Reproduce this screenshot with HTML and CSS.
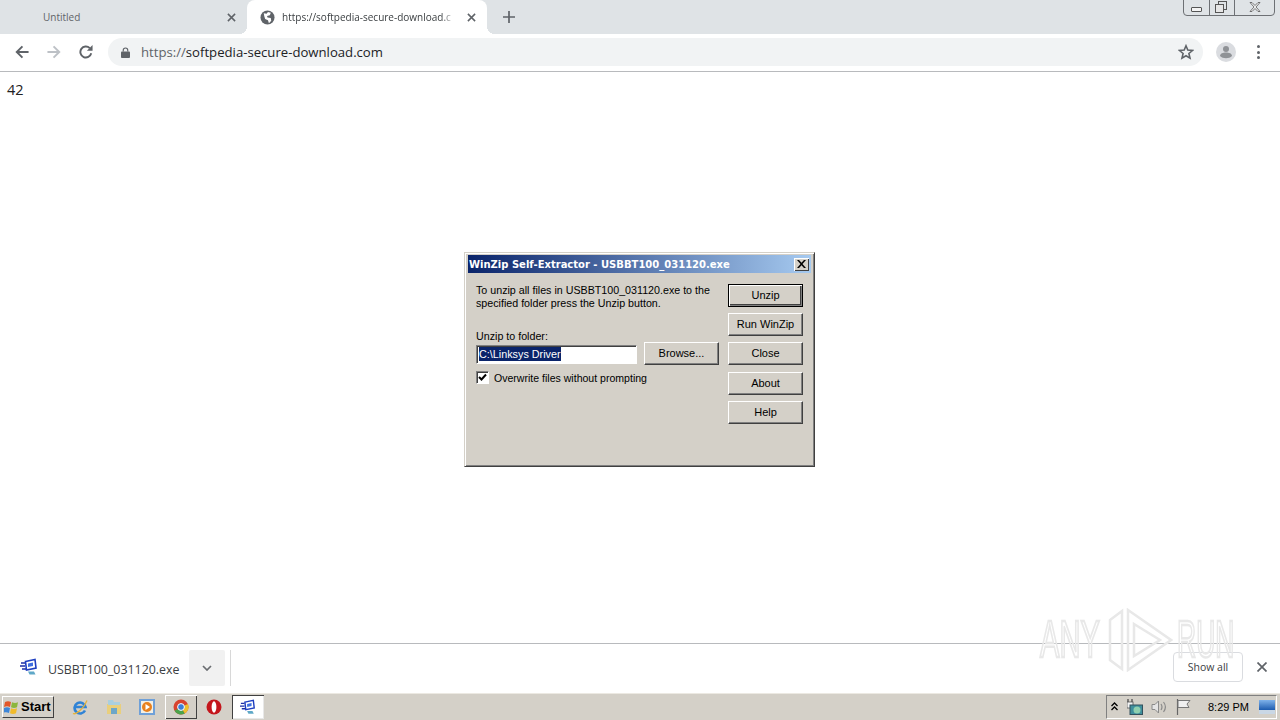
FILE: index.html
```html
<!DOCTYPE html>
<html lang="en">
<head>
<meta charset="utf-8">
<title>softpedia-secure-download.com</title>
<link rel="stylesheet" href="styles.css">
</head>
<body>
<div class="screen">
  <header class="tabstrip">
    <div class="tab tab-idle">
      <span class="tab-title">Untitled</span>
      <svg class="tab-x" viewBox="0 0 10 10"><path d="M1 1l8 8M9 1l-8 8"/></svg>
    </div>
    <div class="tab tab-active">
      <svg class="globe" viewBox="0 0 16 16"><circle cx="8" cy="8" r="7.500" fill="#5f6368"/><path d="M4 3.500l3 .5 1.500-2 3 1-1 2.500-3 1 .5 1.500 3.500.5.5 3-2.500 2.500-1-3-3-1.500-1-3z" fill="#fff"/></svg>
      <span class="tab-title tab-url">https://softpedia-secure-download.c</span>
      <svg class="tab-x" viewBox="0 0 10 10"><path d="M1 1l8 8M9 1l-8 8"/></svg>
    </div>
    <svg class="newtab" viewBox="0 0 12 12"><path d="M6 0v12M0 6h12"/></svg>
    <div class="caption">
      <span class="cap cap-min"><i class="min-glyph"></i></span>
      <span class="cap cap-max"><i class="max-back"></i><i class="max-front"></i></span>
      <span class="cap cap-close"><svg viewBox="0 0 12 10"><path d="M1 0.500h2l3 3 3-3h2l-4 4.500 4 4.500h-2l-3-3-3 3h-2l4-4.500z"/></svg></span>
    </div>
  </header>

  <nav class="toolbar">
    <svg class="nav" viewBox="0 0 16 16"><path d="M15.500 8H2M8.500 1.500L2 8l6.500 6.500"/></svg>
    <svg class="nav nav-off" viewBox="0 0 16 16"><path d="M.5 8H14M7.500 1.500L14 8l-6.500 6.500"/></svg>
    <svg class="nav nav-reload" viewBox="0 0 16 16"><path d="M14 9.500A6.300 6.300 0 1 1 12.300 3.500"/><path class="fill" d="M9 6.500H15.500V0z"/></svg>
    <div class="omnibox">
      <svg class="lock" viewBox="0 0 10 12"><path d="M2.500 5V3.500a2.500 2.500 0 0 1 5 0V5" fill="none" stroke="#5f6368" stroke-width="1.300"/><rect y="5" width="10" height="7" rx="1" fill="#5f6368"/></svg>
      <span class="url"><span class="url-dim">https://</span>softpedia-secure-download.com</span>
      <svg class="star" viewBox="0 0 16 16"><path d="M8 1.800l1.800 4.300 4.700.4-3.600 3 1.100 4.600L8 11.700l-4 2.400 1.100-4.600-3.600-3 4.700-.4z"/></svg>
    </div>
    <svg class="avatar" viewBox="0 0 20 20"><circle cx="10" cy="10" r="10" fill="#dadce0"/><circle cx="10" cy="7" r="3" fill="#8f9296"/><path d="M4 14c0-2.500 3-3.500 6-3.500s6 1 6 3.500c-1.500 1.600-3.500 2.200-6 2.200s-4.500-.6-6-2.200z" fill="#8f9296"/></svg>
    <div class="kebab"><i></i><i></i><i></i></div>
  </nav>

  <main class="content">
    <p class="page-text">42</p>
    <section class="dialog">
      <div class="dlg-title">
        <span>WinZip Self-Extractor - USBBT100_031120.exe</span>
        <span class="dlg-x"><svg viewBox="0 0 9 8"><path d="M0 0h2l2.500 2.800L7 0h2L5.500 4 9 8H7L4.500 5.200 2 8H0l3.500-4z"/></svg></span>
      </div>
      <div class="dlg-body">
        <div class="dlg-main">
          <p class="dlg-msg">To unzip all files in USBBT100_031120.exe to the specified folder press the Unzip button.</p>
          <label class="dlg-label">Unzip to folder:</label>
          <div class="dlg-row">
            <div class="dlg-input"><span class="sel">C:\Linksys Driver</span></div>
            <button class="btn">Browse...</button>
          </div>
          <div class="dlg-check">
            <span class="checkbox"><svg viewBox="0 0 9 9"><path d="M1 4l2.500 2.500L8 1.500" /></svg></span>
            <span>Overwrite files without prompting</span>
          </div>
        </div>
        <div class="dlg-side">
          <button class="btn btn-default">Unzip</button>
          <button class="btn">Run WinZip</button>
          <button class="btn">Close</button>
          <button class="btn btn-about">About</button>
          <button class="btn">Help</button>
        </div>
      </div>
    </section>
  </main>

  <section class="downloads">
    <div class="dl-item">
      <svg class="app-icon" viewBox="0 0 18 18"><path d="M5.500 3.500L15 1.500l1 8.500-9.500 2z" fill="#fff" stroke="#1f3fc0" stroke-width="1.600"/><path d="M8 5.500l5-1v3.500l-5 1z" fill="#3f6fe0"/><path d="M1 5h4M0 8h5M2 11h4" stroke="#1c2fa8" stroke-width="1.500"/><path d="M8 13.500h6l1.500 3h-6z" fill="#5fa8c8"/></svg>
      <span class="dl-name">USBBT100_031120.exe</span>
      <span class="dl-more"><svg viewBox="0 0 10 6"><path d="M1 1l4 4 4-4"/></svg></span>
      <i class="dl-sep"></i>
    </div>
    <div class="dl-end">
      <button class="showall">Show all</button>
      <svg class="dl-close" viewBox="0 0 10 10"><path d="M.5.500l9 9M9.500.500l-9 9"/></svg>
    </div>
    <div class="watermark">
      <span class="wm-text wm-any">ANY</span>
      <svg class="wm-logo" viewBox="0 0 65 64"><path d="M2 12L14 3v58L2 52z" fill="none" stroke="#e8e8e8" stroke-width="2.500"/><path d="M20 2l43 30-43 30z" fill="none" stroke="#e8e8e8" stroke-width="2.500"/><path d="M26 16l26 16-26 16z" fill="none" stroke="#e8e8e8" stroke-width="2.500"/></svg>
      <span class="wm-text wm-run">RUN</span>
    </div>
  </section>

  <footer class="taskbar">
    <button class="start">
      <svg viewBox="0 0 16 16"><path d="M1 3c2-1 4-1 6 0l-1 5C4 7 2 7 0 8z" fill="#e2572a"/><path d="M8 3.300c2 1 4 1 6 0l-1 5c-2 1-4 1-6 0z" fill="#8cb63c"/><path d="M0 9c2-1 4-1 6 0l-1 5c-2-1-4-1-6 0z" fill="#3d86d8"/><path d="M7 9.300c2 1 4 1 6 0l-1 5c-2 1-4 1-6 0z" fill="#f1bb2b"/></svg>
      <span>Start</span>
    </button>
    <div class="quick">
      <span class="qi"><svg viewBox="0 0 16 16"><path d="M13 11.500A5.500 5.500 0 1 1 13.500 8H3" fill="none" stroke="#2f83d6" stroke-width="2.600"/><path d="M1 14.500c3 1.500 11-5 14-13" fill="none" stroke="#e6b33a" stroke-width="1.300"/></svg></span>
      <span class="qi"><svg viewBox="0 0 16 16"><path d="M1 5h14v10H1z" fill="#e9cf7d"/><path d="M2 1h5l1 2h6v3H2z" fill="#a9cfe0"/><rect x="5" y="9" width="6" height="6" fill="#6ca6c9"/></svg></span>
      <span class="qi"><svg viewBox="0 0 16 16"><rect x="0" y="0" width="16" height="16" fill="#6fa0d8"/><rect x="2" y="2" width="12" height="12" fill="#f4efe3"/><circle cx="8" cy="8" r="5" fill="#e8801d"/><path d="M6.500 5l4.500 3-4.500 3z" fill="#fff"/></svg></span>
      <span class="qi qi-raised"><svg viewBox="0 0 16 16"><circle cx="8" cy="8" r="7.500" fill="#d8432f"/><path d="M8 8L1.500 11.800A7.500 7.500 0 0 0 11.800 14.500z" fill="#4aa34a"/><path d="M8 8l3.800 6.500A7.500 7.500 0 0 0 15 5z" fill="#edc02e"/><circle cx="8" cy="8" r="3.400" fill="#3b7ed8" stroke="#fff"/></svg></span>
      <span class="qi"><svg viewBox="0 0 16 16"><circle cx="8" cy="8" r="7.500" fill="#c4161c"/><ellipse cx="8" cy="8" rx="2.400" ry="5.800" fill="#fff"/></svg></span>
      <span class="qi qi-active"><svg viewBox="0 0 18 18"><path d="M5.500 3.500L15 1.500l1 8.500-9.500 2z" fill="#fff" stroke="#1f3fc0" stroke-width="1.600"/><path d="M8 5.500l5-1v3.500l-5 1z" fill="#3f6fe0"/><path d="M1 5h4M0 8h5M2 11h4" stroke="#1c2fa8" stroke-width="1.500"/><path d="M8 13.500h6l1.500 3h-6z" fill="#5fa8c8"/></svg></span>
    </div>
    <div class="tray">
      <svg class="tray-up" viewBox="0 0 7 9"><path d="M.5 4l3-3 3 3M.5 8l3-3 3 3"/></svg>
      <svg class="tray-i" viewBox="0 0 16 16"><path d="M1 0v3M5 0v3" stroke="#444" stroke-width="1.200"/><rect x="0" y="3" width="6" height="6" fill="#f4f4f4" stroke="#555" stroke-width=".8"/><rect x="3" y="6" width="12.500" height="9.500" fill="#3f8f9c" stroke="#33505c"/><circle cx="10" cy="11" r="3.500" fill="#8fd0b0"/></svg>
      <svg class="tray-i" viewBox="0 0 16 16"><path d="M1 5.500h3L7.500 2v12L4 10.500H1z" fill="#e4e4e4" stroke="#8a8a8a"/><path d="M10 5c1.300 2 1.300 4 0 6M12.500 3c2.300 3 2.300 7 0 10" fill="none" stroke="#8a8a8a" stroke-width="1.200"/></svg>
      <svg class="tray-i" viewBox="0 0 16 16"><path d="M2.500 0v16" stroke="#666" stroke-width="1.200"/><path d="M3 1.500h12l-3 3.500 2 3.500H3z" fill="#efefef" stroke="#777"/></svg>
      <span class="clock">8:29 PM</span>
      <span class="showdesk"></span>
    </div>
  </footer>
</div>
</body>
</html>
```
FILE: styles.css
```css
* { box-sizing: border-box; }
html, body { margin: 0; padding: 0; }
body { font-family: "Open Sans", "Liberation Sans", sans-serif; background: #fff; }
.screen { width: 1280px; height: 720px; display: flex; flex-direction: column; overflow: hidden; }

/* tab strip */
.tabstrip { height: 34px; flex: none; background: #dfe3e6; display: flex; align-items: stretch; position: relative; }
.tab { display: flex; align-items: center; font-size: 10px; color: #5f6368; }
.tab-idle { width: 247px; padding: 0 11px 0 43px; }
.tab-active { position: relative; background: #fff; border-radius: 8px 8px 0 0; padding: 0 11px 0 13px; width: 240px; color: #3c4043; }
.tab-active::before, .tab-active::after { content: ""; position: absolute; bottom: 0; width: 8px; height: 8px; }
.tab-active::before { left: -8px; background: radial-gradient(circle at 0 0, transparent 8px, #fff 8px); }
.tab-active::after { right: -8px; background: radial-gradient(circle at 100% 0, transparent 8px, #fff 8px); }
.tab-title { flex: 1; white-space: nowrap; overflow: hidden; }
.tab-url { margin-left: 7px; margin-right: 8px; -webkit-mask-image: linear-gradient(90deg, #000 90%, transparent 98%); mask-image: linear-gradient(90deg, #000 90%, transparent 98%); }
.tab-x { width: 9px; height: 9px; stroke: #5f6368; stroke-width: 1.700; fill: none; flex: none; }
.globe { width: 15px; height: 15px; flex: none; }
.newtab { width: 12px; height: 12px; margin: 11px 0 0 16px; stroke: #5f6368; stroke-width: 1.700; fill: none; }
.caption { position: absolute; top: -3px; right: 5px; width: 92px; height: 19px; background: #dfe3e6; border: 1px solid #6d7074; border-radius: 0 0 4px 4px; display: flex; }
.cap { display: flex; align-items: center; justify-content: center; position: relative; }
.cap + .cap { border-left: 1px solid #6d7074; }
.cap-min { width: 25px; }
.cap-max { width: 25px; }
.cap-close { flex: 1; }
.min-glyph { width: 11px; height: 5px; border: 1px solid #555; border-radius: 1px; background: #f4f4f4; margin-top: 6px; }
.max-back { position: absolute; left: 8px; top: 3px; width: 9px; height: 9px; border: 1px solid #555; }
.max-front { position: absolute; left: 5px; top: 6px; width: 9px; height: 9px; border: 1px solid #555; background: #e6e6e6; }
.cap-close svg { width: 12px; height: 10px; fill: #f4f4f4; stroke: #555; stroke-width: .8; }

/* toolbar */
.toolbar { height: 38px; flex: none; background: #fff; border-bottom: 1px solid #b8babd; display: flex; align-items: center; padding: 0 0 1px 15px; }
.nav { width: 14px; height: 14px; fill: none; stroke: #5f6368; stroke-width: 2.200; margin-right: 18px; flex: none; }
.nav-off { stroke: #bdc1c6; }
.nav-reload { margin-right: 15px; }
.nav-reload .fill { fill: #5f6368; stroke: none; }
.omnibox { width: 1095px; height: 28px; background: #f1f3f4; border-radius: 14px; display: flex; align-items: center; padding: 0 9px 0 13px; flex: none; }
.lock { width: 9px; height: 11px; flex: none; }
.url { flex: 1; margin-left: 11px; font-size: 13.150px; color: #202124; white-space: nowrap; }
.url-dim { color: #5f6368; }
.star { width: 16px; height: 16px; fill: none; stroke: #5f6368; stroke-width: 1.600; flex: none; }
.avatar { width: 20px; height: 20px; margin-left: 13px; flex: none; }
.kebab { margin-left: 21px; width: 3px; display: flex; flex-direction: column; gap: 2.500px; }
.kebab i { width: 3px; height: 3px; background: #5f6368; border-radius: 50%; }

/* page */
.content { flex: 1; position: relative; background: #fff; }
.page-text { margin: 0; position: absolute; left: 7px; top: 9px; font-size: 14.500px; line-height: 18px; color: #222; }
.dialog { position: absolute; left: 464px; top: 180px; width: 351px; height: 215px; background: #d4d0c8; border: 1px solid; border-color: #d4d0c8 #404040 #404040 #d4d0c8; box-shadow: inset 1px 1px 0 #fff, inset -1px -1px 0 #808080; padding: 2px 3px; font-family: "Liberation Sans", sans-serif; font-size: 10.700px; color: #000; display: flex; flex-direction: column; }
.dlg-title { height: 18px; flex: none; background: linear-gradient(90deg, #0a246a, #a6caf0); color: #fff; font: bold 10px "DejaVu Sans", sans-serif; display: flex; align-items: center; justify-content: space-between; padding: 0 2px 0 1px; white-space: nowrap; }
.dlg-x { width: 15px; height: 13px; background: #d4d0c8; box-shadow: inset 1px 1px 0 #fff, inset -1px -1px 0 #404040; display: flex; align-items: center; justify-content: center; }
.dlg-x svg { width: 9px; height: 8px; fill: #000; }
.dlg-body { flex: 1; display: flex; padding: 11px 8px 0 8px; justify-content: space-between; }
.dlg-main { width: 243px; }
.dlg-msg { margin: 0; line-height: 13px; }
.dlg-label { display: block; margin-top: 20px; line-height: 13px; }
.dlg-row { display: flex; justify-content: space-between; align-items: flex-start; margin-top: -1px; }
.dlg-input { width: 161px; height: 19px; margin-top: 3px; background: #fff; border: 1px solid; border-color: #808080 #fff #fff #808080; box-shadow: inset 1px 1px 0 #404040; padding: 1px 0 0 2px; }
.sel { background: #0a246a; color: #fff; display: inline-block; height: 14px; line-height: 14px; font-size: 10.800px; }
.btn { width: 75px; height: 23px; padding: 0 0 1px; background: #d4d0c8; font: 11px "Liberation Sans", sans-serif; color: #000; border: 1px solid; border-color: #fff #404040 #404040 #fff; box-shadow: inset -1px -1px 0 #808080; }
.btn-default { border-color: #000; box-shadow: inset 1px 1px 0 #fff, inset -1px -1px 0 #808080, inset -2px -2px 0 #404040; }
.btn-about { margin-top: 1px; }
.dlg-check { display: flex; align-items: center; margin-top: 6px; font-size: 10.550px; }
.checkbox { width: 13px; height: 13px; background: #fff; border: 1px solid; border-color: #808080 #fff #fff #808080; box-shadow: inset 1px 1px 0 #404040; margin-right: 5px; display: flex; align-items: center; justify-content: center; }
.checkbox svg { width: 9px; height: 9px; fill: none; stroke: #000; stroke-width: 2; }
.dlg-side { display: flex; flex-direction: column; gap: 6px; }

/* downloads */
.downloads { height: 49px; flex: none; background: #fff; border-top: 1px solid #b8babd; display: flex; align-items: center; justify-content: space-between; position: relative; padding-left: 20px; }
.dl-item { display: flex; align-items: center; }
.app-icon { width: 18px; height: 18px; margin-top: -2px; }
.dl-name { font-size: 12.400px; color: #3c4043; margin-left: 10px; width: 141px; white-space: nowrap; padding-top: 2px; }
.dl-more { width: 36px; height: 36px; background: #f1f1f1; border-radius: 2px; display: flex; align-items: center; justify-content: center; }
.dl-more svg { width: 10px; height: 6px; fill: none; stroke: #6a6d71; stroke-width: 1.700; }
.dl-sep { width: 1px; height: 36px; background: #d8d8d8; margin-left: 5px; }
.dl-end { display: flex; align-items: center; margin: -2px 13px 0 0; }
.showall { width: 70px; height: 30px; background: #fff; border: 1px solid #dadce0; border-radius: 4px; font: 10.500px "Open Sans", sans-serif; color: #3c4043; padding: 0; }
.dl-close { width: 10px; height: 10px; margin-left: 14px; stroke: #5f6368; stroke-width: 1.700; fill: none; }
.watermark { position: absolute; left: 1040px; top: -36px; height: 64px; display: flex; align-items: center; pointer-events: none; }
.wm-text { display: block; height: 64px; color: transparent; -webkit-text-stroke: 2.500px #e8e8e8; font: 51px/64px "Liberation Sans", sans-serif; transform-origin: left center; white-space: nowrap; }
.wm-any { width: 68px; transform: scaleX(.57); }
.wm-run { width: 55px; margin-left: 4px; transform: scaleX(.52); }
.wm-logo { width: 65px; height: 64px; }

/* taskbar */
.taskbar { height: 28px; flex: none; background: #d4d0c8; border-top: 1px solid #fff; box-shadow: inset 0 1px 0 #ece9e2; display: flex; align-items: center; padding: 0 3px 0 2px; }
.start { width: 52px; height: 22px; padding: 0 0 0 1px; background: #d4d0c8; border: 1px solid; border-color: #fff #404040 #404040 #fff; display: flex; align-items: center; font: bold 13px "Liberation Sans", sans-serif; color: #000; }
.start svg { width: 16px; height: 16px; margin-right: 1px; }
.quick { display: flex; align-items: center; margin-left: 10px; gap: 1.600px; }
.qi { width: 32px; height: 24px; display: flex; align-items: center; justify-content: center; }
.qi svg { width: 16px; height: 16px; }
.qi-raised { background: #d4d0c8; box-shadow: inset 1px 1px 0 #fff, inset -1px -1px 0 #404040; }
.qi-active { background: #fff; box-shadow: inset 1px 1px 0 #404040, inset -1px -1px 0 #e8e8e8; }
.tray { margin-left: auto; height: 24px; width: 171px; border: 1px solid; border-color: #808080 #fff #fff #808080; display: flex; align-items: center; padding-left: 4px; }
.tray-up { width: 7px; height: 9px; fill: none; stroke: #000; stroke-width: 1.300; margin-right: 9px; flex: none; }
.tray-i { width: 16px; height: 16px; margin-right: 8px; flex: none; }
.clock { font: 11px "Liberation Sans", sans-serif; margin-left: 9px; width: 51px; color: #000; white-space: nowrap; }
.showdesk { width: 16px; height: 14px; background: linear-gradient(#7fb2ea, #1f5db0 70%, #c9d7e5 70%); }
```
